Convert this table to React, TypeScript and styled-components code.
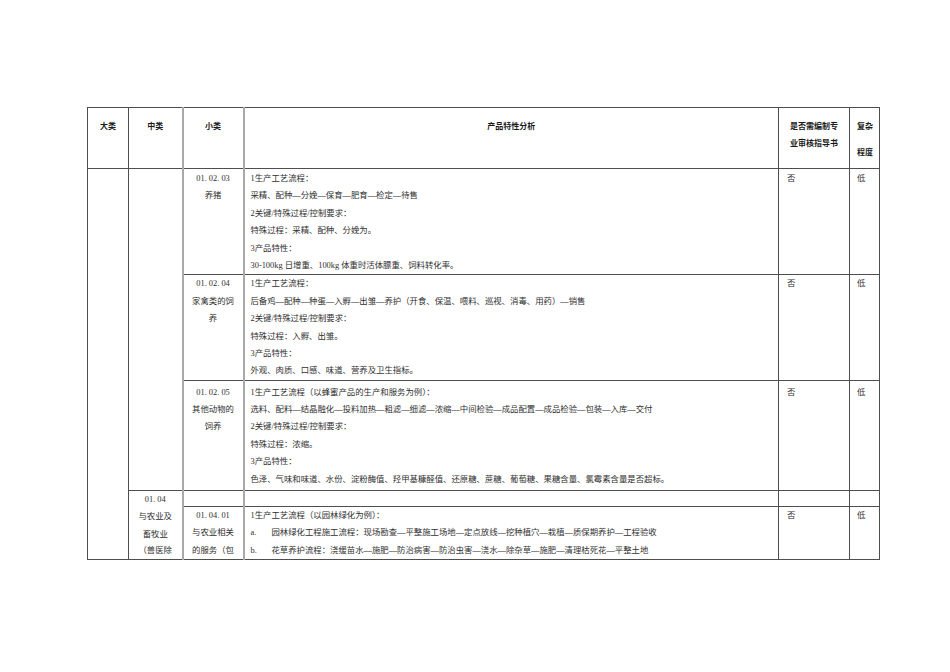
import React from "react";
import styled, { createGlobalStyle } from "styled-components";

const Global = createGlobalStyle`
  html, body { margin: 0; padding: 0; background: #ffffff; }
  body { font-family: "Liberation Serif", "Noto Sans CJK SC", serif; }
`;

const Page = styled.div`
  width: 950px;
  height: 672px;
  box-sizing: border-box;
  padding: 107px 0 0 87px;
  background: #fff;
  overflow: hidden;
`;

const Table = styled.table`
  border-collapse: collapse;
  table-layout: fixed;
  width: 792px;
  color: #303030;
`;

const HeadCell = styled.th<{ $lh?: number; $pt?: number; $align?: string; $gray?: boolean; $pl?: number }>`
  border: 1px solid #4e4e4e;
  ${(p) => (p.$gray ? "border-left: 2px solid #a9a9a9; border-right: 2px solid #a9a9a9;" : "")}
  height: 61px;
  box-sizing: border-box;
  vertical-align: top;
  padding: ${(p) => p.$pt ?? 10}px 0 0 ${(p) => p.$pl ?? 0}px;
  font-family: "Liberation Sans", "Noto Sans CJK SC", sans-serif;
  font-weight: 700;
  font-size: 8px;
  line-height: ${(p) => p.$lh ?? 17}px;
  color: #1a1a1a;
  text-align: ${(p) => p.$align ?? "center"};
`;

const Cell = styled.td<{ $align?: string; $gray?: boolean; $pt?: number; $pb?: number; $pl?: number }>`
  border: 1px solid #4e4e4e;
  ${(p) => (p.$gray ? "border-left: 2px solid #a9a9a9; border-right: 2px solid #a9a9a9;" : "")}
  vertical-align: top;
  padding: ${(p) => p.$pt ?? 0}px 0 ${(p) => p.$pb ?? 0}px ${(p) => p.$pl ?? 0}px;
  font-size: 8.4px;
  line-height: 17.4px;
  text-align: ${(p) => p.$align ?? "left"};
  white-space: nowrap;
  overflow: hidden;
`;

const Line = styled.div<{ $h?: number }>`
  height: ${(p) => p.$h ?? 17.4}px;
  line-height: ${(p) => p.$h ?? 17.4}px;
`;

const Marker = styled.span`
  display: inline-block;
  width: 21px;
`;

const EmptyRow = styled.tr`
  height: 16px;
`;

type Block = { code: string; name: string[]; lines: string[]; pt?: number; pb?: number };

const blocks: Block[] = [
  {
    code: "01. 02. 03",
    name: ["养猪"],
    lines: [
      "1生产工艺流程：",
      "采精、配种—分娩—保育—肥育—检定—待售",
      "2关键/特殊过程/控制要求：",
      "特殊过程：采精、配种、分娩为。",
      "3产品特性：",
      "30-100kg 日增重、100kg 体重时活体膘重、饲料转化率。",
    ],
    pt: 1,
  },
  {
    code: "01. 02. 04",
    name: ["家禽类的饲", "养"],
    lines: [
      "1生产工艺流程：",
      "后备鸡—配种—种蛋—入孵—出雏—养护（开食、保温、喂料、巡视、消毒、用药）—销售",
      "2关键/特殊过程/控制要求：",
      "特殊过程：入孵、出雏。",
      "3产品特性：",
      "外观、肉质、口感、味道、营养及卫生指标。",
    ],
    pt: 0,
  },
  {
    code: "01. 02. 05",
    name: ["其他动物的", "饲养"],
    lines: [
      "1生产工艺流程（以蜂蜜产品的生产和服务为例）：",
      "选料、配料—结晶融化—投料加热—粗滤—细滤—浓缩—中间检验—成品配置—成品检验—包装—入库—交付",
      "2关键/特殊过程/控制要求：",
      "特殊过程：浓缩。",
      "3产品特性：",
      "色泽、气味和味道、水份、淀粉酶值、羟甲基糠醛值、还原糖、蔗糖、葡萄糖、果糖含量、氯霉素含量是否超标。",
    ],
    pt: 3,
    pb: 2,
  },
];

export default function App() {
  return (
    <>
      <Global />
      <Page>
        <Table>
          <colgroup>
            <col style={{ width: 41 }} />
            <col style={{ width: 54 }} />
            <col style={{ width: 61 }} />
            <col style={{ width: 535 }} />
            <col style={{ width: 71 }} />
            <col style={{ width: 30 }} />
          </colgroup>
          <thead>
            <tr>
              <HeadCell>大类</HeadCell>
              <HeadCell>中类</HeadCell>
              <HeadCell $gray>小类</HeadCell>
              <HeadCell>产品特性分析</HeadCell>
              <HeadCell>
                是否需编制专
                <br />
                业审核指导书
              </HeadCell>
              <HeadCell $lh={26} $pt={6} $align="left" $pl={7}>
                复杂
                <br />
                程度
              </HeadCell>
            </tr>
          </thead>
          <tbody>
            {blocks.map((b, i) => (
              <tr key={b.code}>
                {i === 0 && <Cell rowSpan={6} />}
                {i === 0 && <Cell rowSpan={3} />}
                <Cell $gray $align="center" $pt={b.pt} $pb={b.pb}>
                  <Line>{b.code}</Line>
                  {b.name.map((n) => (
                    <Line key={n}>{n}</Line>
                  ))}
                </Cell>
                <Cell $pl={6} $pt={b.pt} $pb={b.pb}>
                  {b.lines.map((l) => (
                    <Line key={l}>{l}</Line>
                  ))}
                </Cell>
                <Cell $pl={8} $pt={b.pt}>
                  <Line>否</Line>
                </Cell>
                <Cell $pl={7} $pt={b.pt}>
                  <Line>低</Line>
                </Cell>
              </tr>
            ))}
            <EmptyRow>
              <Cell rowSpan={2} $align="center">
                <Line $h={17}>01. 04</Line>
                <Line $h={17.6}>与农业及</Line>
                <Line $h={17.6}>畜牧业</Line>
                <Line $h={16}>（兽医除</Line>
              </Cell>
              <Cell $gray />
              <Cell />
              <Cell />
              <Cell />
            </EmptyRow>
            <tr>
              <Cell $gray $align="center">
                <Line>01. 04. 01</Line>
                <Line>与农业相关</Line>
                <Line>的服务（包</Line>
              </Cell>
              <Cell $pl={6}>
                <Line>1生产工艺流程（以园林绿化为例）：</Line>
                <Line>
                  <Marker>a.</Marker>园林绿化工程施工流程：现场勘查—平整施工场地—定点放线—挖种植穴—栽植—质保期养护—工程验收
                </Line>
                <Line>
                  <Marker>b.</Marker>花草养护流程：浇缓苗水—施肥—防治病害—防治虫害—浇水—除杂草—施肥—清理枯死花—平整土地
                </Line>
              </Cell>
              <Cell $pl={8}>
                <Line>否</Line>
              </Cell>
              <Cell $pl={7}>
                <Line>低</Line>
              </Cell>
            </tr>
          </tbody>
        </Table>
      </Page>
    </>
  );
}
